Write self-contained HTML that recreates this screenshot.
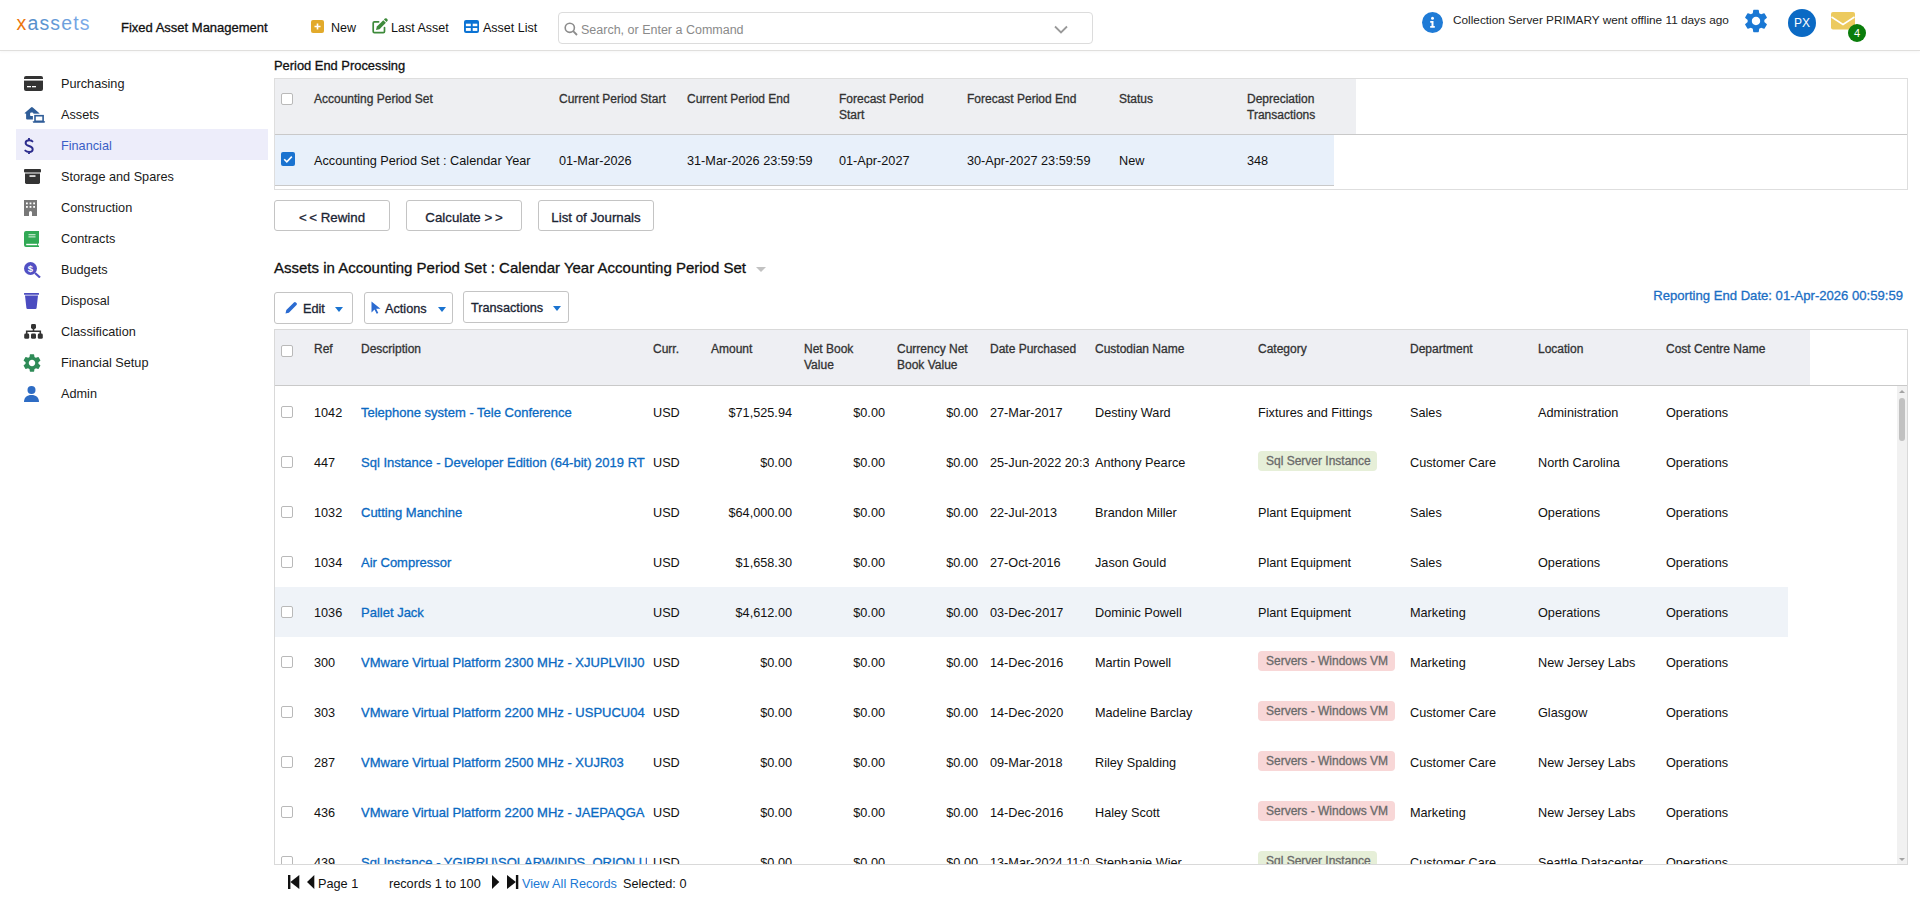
<!DOCTYPE html>
<html><head><meta charset="utf-8"><title>Fixed Asset Management</title>
<style>
*{box-sizing:border-box;margin:0;padding:0}
html,body{width:1920px;height:911px;overflow:hidden;background:#fff}
body{font-family:"Liberation Sans",sans-serif;font-size:12.7px;color:#111;position:relative}
.a{position:absolute;white-space:nowrap}
.sb{-webkit-text-stroke:0.3px currentColor}
.hdr{position:absolute;left:0;top:0;width:1920px;height:51px;border-bottom:1px solid #e0dfdd;box-shadow:0 1px 3px rgba(0,0,0,0.04);background:#fff}
.cb{position:absolute;width:12px;height:12px;border:1px solid #b9b9b9;border-radius:2px;background:#fff}
.btn{position:absolute;height:31px;border:1px solid #c4c4c4;border-radius:3px;background:#fff;color:#1b2433}
.lnk{color:#0a69c2;font-size:13px;-webkit-text-stroke:0.3px currentColor}
.badge{position:absolute;height:20px;border-radius:4px;color:#6a6a6a;padding:0 6.5px 0 8px;line-height:20px}
.bg{background:#e6efd8}.br{background:#f8d7d7}
.nav{position:absolute;left:61px;color:#1a1a1a}
</style></head><body>

<div class="hdr"></div>
<svg class="a" style="left:14px;top:8px" width="80" height="26" viewBox="0 0 80 26"><defs><linearGradient id="lg" x1="0" y1="0" x2="1" y2="0"><stop offset="0" stop-color="#4a87c2"/><stop offset="1" stop-color="#7eabea"/></linearGradient></defs><text x="2.5" y="22" font-family="Liberation Sans" font-size="19.5" textLength="73" lengthAdjust="spacing"><tspan fill="#ec740c">x</tspan><tspan fill="url(#lg)">assets</tspan></text></svg>
<div class="a sb" style="left:121px;top:20px;font-size:13px;line-height:16px;color:#111">Fixed Asset Management</div>
<div class="a" style="left:311px;top:20px;width:13px;height:13px;background:#e2aa2b;border-radius:2px"><svg width="13" height="13" viewBox="0 0 13 13" style="position:absolute;left:0;top:0"><path d="M6.5 3.5v6M3.5 6.5h6" stroke="#fff" stroke-width="1.6"/></svg></div>
<div class="a" style="left:331px;top:20px;font-size:12.5px;line-height:16px">New</div>
<svg class="a" style="left:368px;top:14px" width="24" height="24" viewBox="0 0 24 24"><path d="M10.6 7.8H6.4Q5.2 7.8 5.2 9V17.4Q5.2 18.6 6.4 18.6H15.3Q16.5 18.6 16.5 17.4V13.5" fill="none" stroke="#3d8a3a" stroke-width="1.7" stroke-linecap="round"/><path d="M8 16.1L8.9 12.6L15.3 6.2L17.9 8.8L11.5 15.2Z" fill="#3d8a3a"/><path d="M15.9 5.6L16.9 4.6Q17.8 3.7 18.7 4.6L19.4 5.3Q20.3 6.2 19.4 7.1L18.5 8.1Z" fill="#3d8a3a"/></svg>
<div class="a" style="left:391px;top:20px;font-size:12.5px;line-height:16px">Last Asset</div>
<div class="a" style="left:464px;top:20px;width:15px;height:13px;background:#0b73d4;border-radius:2px"><svg width="15" height="13" viewBox="0 0 15 13" style="position:absolute;left:0;top:0"><rect x="1.9" y="3.7" width="4.9" height="2.5" fill="#fff"/><rect x="8.7" y="3.7" width="4.6" height="2.5" fill="#fff"/><rect x="1.9" y="8" width="4.9" height="2.9" fill="#fff"/><rect x="8.7" y="8" width="4.6" height="2.9" fill="#fff"/></svg></div>
<div class="a" style="left:483px;top:20px;font-size:12.5px;line-height:16px">Asset List</div>
<div class="a" style="left:558px;top:12px;width:535px;height:32px;border:1px solid #dcdcdc;border-radius:4px;background:#fff"></div>
<div class="a" style="left:564px;top:22px;width:14px;height:14px"><svg width="14" height="14" viewBox="0 0 14 14"><circle cx="5.8" cy="5.8" r="4.6" fill="none" stroke="#8c8c8c" stroke-width="1.6"/><path d="M9.2 9.2l3.8 3.8" stroke="#8c8c8c" stroke-width="1.8"/></svg></div>
<div class="a" style="left:581px;top:22px;font-size:12.5px;line-height:16px;color:#8a8a8a">Search, or Enter a Command</div>
<div class="a" style="left:1054px;top:23px;width:14px;height:9px"><svg width="14" height="9" viewBox="0 0 14 9"><path d="M1 1.5l6 6 6-6" fill="none" stroke="#999" stroke-width="1.8"/></svg></div>
<div class="a" style="left:1422px;top:11.5px;width:21px;height:21px;border-radius:50%;background:#1f7bd6"><svg width="21" height="21" viewBox="0 0 21 21" style="position:absolute;left:0;top:0"><circle cx="10.5" cy="6.3" r="1.5" fill="#fff"/><path d="M8.2 9h3.3v5h1.3v1.8H8.2V14h1.3v-3.2H8.2z" fill="#fff"/></svg></div>
<div class="a" style="left:1453px;top:13px;font-size:11.8px;line-height:15px;color:#222">Collection Server PRIMARY went offline 11 days ago</div>
<div class="a" style="left:1742px;top:7px;width:28px;height:28px"><svg width="28" height="28" viewBox="0 0 24 24"><path fill="#1a78d4" d="M19.14 12.94c.04-.3.06-.61.06-.94 0-.32-.02-.64-.07-.94l2.03-1.58a.49.49 0 0 0 .12-.61l-1.92-3.32a.488.488 0 0 0-.59-.22l-2.39.96c-.5-.38-1.03-.7-1.62-.94l-.36-2.54a.484.484 0 0 0-.48-.41h-3.84c-.24 0-.43.17-.47.41l-.36 2.54c-.59.24-1.13.57-1.62.94l-2.39-.96c-.22-.08-.47 0-.59.22L2.74 8.87c-.12.21-.08.47.12.61l2.03 1.58c-.05.3-.09.63-.09.94s.02.64.07.94l-2.03 1.58a.49.49 0 0 0-.12.61l1.92 3.32c.12.22.37.29.59.22l2.39-.96c.5.38 1.03.7 1.62.94l.36 2.54c.05.24.24.41.48.41h3.84c.24 0 .44-.17.47-.41l.36-2.54c.59-.24 1.13-.56 1.62-.94l2.39.96c.22.08.47 0 .59-.22l1.92-3.32c.12-.22.07-.47-.12-.61l-2.01-1.58zM12 15.6c-1.98 0-3.6-1.62-3.6-3.6s1.62-3.6 3.6-3.6 3.6 1.62 3.6 3.6-1.62 3.6-3.6 3.6z"/></svg></div>
<div class="a" style="left:1788px;top:9px;width:28px;height:28px;border-radius:50%;background:#0b6ac4;color:#fff;font-size:12px;line-height:28px;text-align:center">PX</div>
<div class="a" style="left:1831px;top:12px;width:24px;height:18px"><svg width="24" height="18" viewBox="0 0 24 18"><rect x="0" y="0" width="24" height="17.5" rx="2" fill="#ecca5e"/><path d="M0.5 5l11.5 7.5L23.5 5" fill="none" stroke="#fff" stroke-width="1.5"/></svg></div>
<div class="a" style="left:1848px;top:23.5px;width:18px;height:18px;border-radius:50%;background:#0a7d0b;color:#fff;font-size:11px;line-height:18px;text-align:center">4</div>
<div class="a" style="left:16px;top:129px;width:252px;height:31px;background:#ededfa"></div>
<div class="a" style="left:61px;top:76px;font-size:12.7px;line-height:16px;color:#1a1a1a">Purchasing</div>
<div class="a" style="left:61px;top:107px;font-size:12.7px;line-height:16px;color:#1a1a1a">Assets</div>
<div class="a" style="left:61px;top:138px;font-size:12.7px;line-height:16px;color:#3a5ec6">Financial</div>
<div class="a" style="left:61px;top:169px;font-size:12.7px;line-height:16px;color:#1a1a1a">Storage and Spares</div>
<div class="a" style="left:61px;top:200px;font-size:12.7px;line-height:16px;color:#1a1a1a">Construction</div>
<div class="a" style="left:61px;top:231px;font-size:12.7px;line-height:16px;color:#1a1a1a">Contracts</div>
<div class="a" style="left:61px;top:262px;font-size:12.7px;line-height:16px;color:#1a1a1a">Budgets</div>
<div class="a" style="left:61px;top:293px;font-size:12.7px;line-height:16px;color:#1a1a1a">Disposal</div>
<div class="a" style="left:61px;top:324px;font-size:12.7px;line-height:16px;color:#1a1a1a">Classification</div>
<div class="a" style="left:61px;top:355px;font-size:12.7px;line-height:16px;color:#1a1a1a">Financial Setup</div>
<div class="a" style="left:61px;top:386px;font-size:12.7px;line-height:16px;color:#1a1a1a">Admin</div>
<div class="a" style="left:24px;top:76px"><svg width="19" height="15" viewBox="0 0 19 15"><rect x="0" y="0" width="19" height="15" rx="2" fill="#333"/><rect x="0" y="3" width="19" height="1.6" fill="#fff"/><rect x="3" y="10" width="4" height="1.3" fill="#fff"/><rect x="8" y="10" width="4" height="1.3" fill="#fff"/></svg></div>
<div class="a" style="left:24px;top:106px"><svg width="22" height="18" viewBox="0 0 22 18"><path d="M0.4 7.2L7 1.4Q7.9 0.6 8.8 1.4L15.4 7.2Q15.8 7.7 15.2 7.7H2.1V12.6Q2.1 13.6 3.1 13.6H8.9V7.7H2.1Z" fill="#2f5d98"/><rect x="6.1" y="6.4" width="3.3" height="3.7" rx="1.2" fill="#fff"/><rect x="9.4" y="7.9" width="12" height="8" fill="#fff"/><rect x="11" y="9.7" width="8.1" height="5.6" fill="none" stroke="#2f5d98" stroke-width="1.6"/><path d="M8.6 15.2H21.2L20.6 16.8H9.2Z" fill="#2f5d98"/></svg></div>
<div class="a" style="left:24px;top:138px"><svg width="10" height="16" viewBox="0 0 10 16"><path d="M8.4 3.4C7.6 2.6 6.6 2.2 5.2 2.2 3.1 2.2 1.6 3.3 1.6 5c0 1.8 1.5 2.4 3.5 3 2.1.6 3.6 1.3 3.6 3.2 0 1.8-1.6 2.8-3.6 2.8-1.5 0-2.9-.6-3.8-1.4M5 .6v1.6M5 14v1.4" fill="none" stroke="#2b2b8c" stroke-width="1.9" stroke-linecap="round"/></svg></div>
<div class="a" style="left:24px;top:169px"><svg width="17" height="15" viewBox="0 0 17 15"><rect x="0" y="0" width="17" height="3.6" rx="1" fill="#333"/><path d="M1 4.6h15v9a1.4 1.4 0 0 1-1.4 1.4H2.4A1.4 1.4 0 0 1 1 13.6z" fill="#333"/><rect x="5.5" y="6.3" width="6" height="1.5" fill="#fff"/></svg></div>
<div class="a" style="left:24px;top:200px"><svg width="13" height="16" viewBox="0 0 13 16"><path d="M0 0h13v16H8v-3.5a1.5 1.5 0 0 0-3 0V16H0z" fill="#787878"/><g fill="#fff"><rect x="2" y="2.5" width="1.8" height="1.8"/><rect x="5.6" y="2.5" width="1.8" height="1.8"/><rect x="9.2" y="2.5" width="1.8" height="1.8"/><rect x="2" y="6" width="1.8" height="1.8"/><rect x="5.6" y="6" width="1.8" height="1.8"/><rect x="9.2" y="6" width="1.8" height="1.8"/></g></svg></div>
<div class="a" style="left:24px;top:231px"><svg width="15" height="16" viewBox="0 0 15 16"><path d="M2 0h13v12.5h-1v2h1V16H2a2 2 0 0 1-2-2V2a2 2 0 0 1 2-2z" fill="#31a955"/><rect x="4.5" y="3" width="7" height="1.3" fill="#b8e4c4"/><rect x="4.5" y="5.2" width="7" height="1.3" fill="#b8e4c4"/><rect x="2.2" y="12.8" width="11" height="1.4" fill="#fff"/></svg></div>
<div class="a" style="left:24px;top:262px"><svg width="17" height="16" viewBox="0 0 17 16"><circle cx="6.5" cy="6.5" r="6.5" fill="#5250c3"/><path d="M11 11l5 4.5" stroke="#5250c3" stroke-width="2.2"/><text x="6.5" y="10" text-anchor="middle" font-family="Liberation Sans" font-weight="bold" font-size="9.5" fill="#fff">$</text></svg></div>
<div class="a" style="left:24px;top:293px"><svg width="15" height="16" viewBox="0 0 15 16"><rect x="0" y="0" width="15" height="1.8" rx="0.5" fill="#4b4cc0"/><path d="M1 2.6h13l-1.4 12.4a1.2 1.2 0 0 1-1.2 1H3.6a1.2 1.2 0 0 1-1.2-1z" fill="#4b4cc0"/></svg></div>
<div class="a" style="left:24px;top:324px"><svg width="19" height="15" viewBox="0 0 19 15"><rect x="7" y="0" width="5" height="5" rx="1.4" fill="#333"/><path d="M9.5 4v3.4M2.7 10V7.3h13.6V10" fill="none" stroke="#333" stroke-width="1.6"/><rect x="0.2" y="9.6" width="5" height="5.2" rx="1.4" fill="#333"/><rect x="7" y="9.6" width="5" height="5.2" rx="1.4" fill="#333"/><rect x="13.8" y="9.6" width="5" height="5.2" rx="1.4" fill="#333"/></svg></div>
<div class="a" style="left:23px;top:354px"><svg width="18" height="18" viewBox="2 2 20 20"><path fill="#2e8b57" d="M19.14 12.94c.04-.3.06-.61.06-.94 0-.32-.02-.64-.07-.94l2.03-1.58a.49.49 0 0 0 .12-.61l-1.92-3.32a.488.488 0 0 0-.59-.22l-2.39.96c-.5-.38-1.03-.7-1.62-.94l-.36-2.54a.484.484 0 0 0-.48-.41h-3.84c-.24 0-.43.17-.47.41l-.36 2.54c-.59.24-1.13.57-1.62.94l-2.39-.96c-.22-.08-.47 0-.59.22L2.74 8.87c-.12.21-.08.47.12.61l2.03 1.58c-.05.3-.09.63-.09.94s.02.64.07.94l-2.03 1.58a.49.49 0 0 0-.12.61l1.92 3.32c.12.22.37.29.59.22l2.39-.96c.5.38 1.03.7 1.62.94l.36 2.54c.05.24.24.41.48.41h3.84c.24 0 .44-.17.47-.41l.36-2.54c.59-.24 1.13-.56 1.62-.94l2.39.96c.22.08.47 0 .59-.22l1.92-3.32c.12-.22.07-.47-.12-.61l-2.01-1.58zM12 15.6c-1.98 0-3.6-1.62-3.6-3.6s1.62-3.6 3.6-3.6 3.6 1.62 3.6 3.6-1.62 3.6-3.6 3.6z"/></svg></div>
<div class="a" style="left:24px;top:386px"><svg width="15" height="16" viewBox="0 0 15 16"><circle cx="7.5" cy="4" r="4" fill="#2e6cc4"/><path d="M0 16c0-4.5 3-7 7.5-7s7.5 2.5 7.5 7z" fill="#2e6cc4"/></svg></div>
<div class="a sb" style="left:274px;top:58px;font-size:12.9px;line-height:16px;color:#111">Period End Processing</div>
<div class="a" style="left:274px;top:78px;width:1634px;height:112px;border:1px solid #dedede;background:#fff"></div>
<div class="a" style="left:275px;top:79px;width:1081px;height:55px;background:#eeeff2"></div>
<div class="a" style="left:275px;top:134px;width:1632px;height:1px;background:#c9c9c9"></div>
<div class="a" style="left:275px;top:135px;width:1059px;height:50px;background:#e8f0fa"></div>
<div class="a" style="left:275px;top:185px;width:1059px;height:1px;background:#c9c9c9"></div>
<div class="cb" style="left:281px;top:93px"></div>
<div class="a" style="left:281px;top:152px;width:14px;height:14px;background:#1a73d0;border-radius:2px"><svg width="14" height="14" viewBox="0 0 14 14" style="position:absolute;left:0;top:0"><path d="M3.2 7.2l2.6 2.6 5-5.2" fill="none" stroke="#fff" stroke-width="1.6"/></svg></div>
<div class="a sb" style="left:314px;top:91px;font-size:12px;line-height:16px;color:#333">Accounting Period Set</div>
<div class="a sb" style="left:559px;top:91px;font-size:12px;line-height:16px;color:#333">Current Period Start</div>
<div class="a sb" style="left:687px;top:91px;font-size:12px;line-height:16px;color:#333">Current Period End</div>
<div class="a sb" style="left:839px;top:91px;font-size:12px;line-height:16px;color:#333">Forecast Period<br>Start</div>
<div class="a sb" style="left:967px;top:91px;font-size:12px;line-height:16px;color:#333">Forecast Period End</div>
<div class="a sb" style="left:1119px;top:91px;font-size:12px;line-height:16px;color:#333">Status</div>
<div class="a sb" style="left:1247px;top:91px;font-size:12px;line-height:16px;color:#333">Depreciation<br>Transactions</div>
<div class="a" style="left:314px;top:153px;font-size:12.7px;line-height:16px">Accounting Period Set : Calendar Year</div>
<div class="a" style="left:559px;top:153px;font-size:12.7px;line-height:16px">01-Mar-2026</div>
<div class="a" style="left:687px;top:153px;font-size:12.7px;line-height:16px">31-Mar-2026 23:59:59</div>
<div class="a" style="left:839px;top:153px;font-size:12.7px;line-height:16px">01-Apr-2027</div>
<div class="a" style="left:967px;top:153px;font-size:12.7px;line-height:16px">30-Apr-2027 23:59:59</div>
<div class="a" style="left:1119px;top:153px;font-size:12.7px;line-height:16px">New</div>
<div class="a" style="left:1247px;top:153px;font-size:12.7px;line-height:16px">348</div>
<div class="btn sb" style="left:274px;top:200px;width:116px;text-align:center;line-height:33px;font-size:13.3px">&lt;&thinsp;&lt; Rewind</div>
<div class="btn sb" style="left:406px;top:200px;width:116px;text-align:center;line-height:33px;font-size:13.3px">Calculate &gt;&thinsp;&gt;</div>
<div class="btn sb" style="left:538px;top:200px;width:116px;text-align:center;line-height:33px;font-size:13.3px">List of Journals</div>
<div class="a sb" style="left:274px;top:259px;font-size:15px;line-height:18px;color:#111">Assets in Accounting Period Set : Calendar Year Accounting Period Set</div>
<div class="a" style="left:756px;top:267px;width:0;height:0;border-left:5.5px solid transparent;border-right:5.5px solid transparent;border-top:5.5px solid #c2c2c2"></div>
<div class="btn" style="left:274px;top:292px;width:79px;height:32px"><svg width="13" height="13" viewBox="0 0 13 13" style="position:absolute;left:10px;top:8px"><path d="M0.5 12.5L1.3 9.1L8.9 1.5Q9.9 0.5 10.9 1.5L11.5 2.1Q12.5 3.1 11.5 4.1L3.9 11.7Z" fill="#2b6bd1"/></svg><span class="a sb" style="left:28px;top:8px;line-height:16px">Edit</span><div style="position:absolute;width:0;height:0;border-left:4.5px solid transparent;border-right:4.5px solid transparent;border-top:5px solid #1a73d0;left:60px;top:14px"></div></div>
<div class="btn" style="left:364px;top:292px;width:89px;height:32px"><svg width="10" height="13" viewBox="0 0 10 13" style="position:absolute;left:6px;top:8px"><path d="M0.5 0.5v11l3-3 2.2 4.3 1.6-.8-2.1-4.2H9.5z" fill="#2b6bd1"/></svg><span class="a sb" style="left:20px;top:8px;line-height:16px">Actions</span><div style="position:absolute;width:0;height:0;border-left:4.5px solid transparent;border-right:4.5px solid transparent;border-top:5px solid #1a73d0;left:73px;top:14px"></div></div>
<div class="btn" style="left:463px;top:291px;width:106px;height:32px"><span class="a sb" style="left:7px;top:8px;line-height:16px">Transactions</span><div style="position:absolute;width:0;height:0;border-left:4.5px solid transparent;border-right:4.5px solid transparent;border-top:5px solid #1a73d0;left:89px;top:14px"></div></div>
<div class="a sb" style="right:17px;top:288px;font-size:13.1px;line-height:16px;color:#1a6ec4">Reporting End Date: 01-Apr-2026 00:59:59</div>
<div class="a" style="left:274px;top:329px;width:1634px;height:536px;border:1px solid #d9d9d9;background:#fff;overflow:hidden">
<div class="a" style="left:0;top:0;width:1535px;height:55px;background:#eeeff3"></div>
<div class="a" style="left:0;top:55px;width:1632px;height:1px;background:#c9c9c9"></div>
<div class="cb" style="left:6px;top:15px"></div>
<div class="a sb" style="left:39px;top:11px;font-size:12px;line-height:16px;color:#333">Ref</div>
<div class="a sb" style="left:86px;top:11px;font-size:12px;line-height:16px;color:#333">Description</div>
<div class="a sb" style="left:378px;top:11px;font-size:12px;line-height:16px;color:#333">Curr.</div>
<div class="a sb" style="left:436px;top:11px;font-size:12px;line-height:16px;color:#333">Amount</div>
<div class="a sb" style="left:529px;top:11px;font-size:12px;line-height:16px;color:#333">Net Book<br>Value</div>
<div class="a sb" style="left:622px;top:11px;font-size:12px;line-height:16px;color:#333">Currency Net<br>Book Value</div>
<div class="a sb" style="left:715px;top:11px;font-size:12px;line-height:16px;color:#333">Date Purchased</div>
<div class="a sb" style="left:820px;top:11px;font-size:12px;line-height:16px;color:#333">Custodian Name</div>
<div class="a sb" style="left:983px;top:11px;font-size:12px;line-height:16px;color:#333">Category</div>
<div class="a sb" style="left:1135px;top:11px;font-size:12px;line-height:16px;color:#333">Department</div>
<div class="a sb" style="left:1263px;top:11px;font-size:12px;line-height:16px;color:#333">Location</div>
<div class="a sb" style="left:1391px;top:11px;font-size:12px;line-height:16px;color:#333">Cost Centre Name</div>
<div class="a" style="left:1622px;top:56px;width:10px;height:479px;background:#f1f1f1"></div>
<div class="a" style="left:1624px;top:68px;width:6px;height:43px;border-radius:3px;background:#c1c1c1"></div>
<div class="a" style="left:1624px;top:60px;width:0;height:0;border-left:3px solid transparent;border-right:3px solid transparent;border-bottom:3px solid #a3a3a3"></div>
<div class="a" style="left:1624px;top:528px;width:0;height:0;border-left:3px solid transparent;border-right:3px solid transparent;border-top:3px solid #a3a3a3"></div>
<div class="cb" style="left:6px;top:76px"></div>
<div class="a " style="left:39px;top:75px;line-height:16px;">1042</div>
<div class="a lnk" style="left:86px;top:75px;line-height:16px;width:286px;overflow:hidden;">Telephone system - Tele Conference</div>
<div class="a " style="left:378px;top:75px;line-height:16px;">USD</div>
<div class="a" style="left:427px;top:75px;width:90px;text-align:right;line-height:16px">$71,525.94</div>
<div class="a" style="left:520px;top:75px;width:90px;text-align:right;line-height:16px">$0.00</div>
<div class="a" style="left:613px;top:75px;width:90px;text-align:right;line-height:16px">$0.00</div>
<div class="a " style="left:715px;top:75px;line-height:16px;width:99px;overflow:hidden;">27-Mar-2017</div>
<div class="a " style="left:820px;top:75px;line-height:16px;width:157px;overflow:hidden;">Destiny Ward</div>
<div class="a " style="left:983px;top:75px;line-height:16px;">Fixtures and Fittings</div>
<div class="a " style="left:1135px;top:75px;line-height:16px;">Sales</div>
<div class="a " style="left:1263px;top:75px;line-height:16px;">Administration</div>
<div class="a " style="left:1391px;top:75px;line-height:16px;">Operations</div>
<div class="cb" style="left:6px;top:126px"></div>
<div class="a " style="left:39px;top:125px;line-height:16px;">447</div>
<div class="a lnk" style="left:86px;top:125px;line-height:16px;width:286px;overflow:hidden;">Sql Instance - Developer Edition (64-bit) 2019 RT</div>
<div class="a " style="left:378px;top:125px;line-height:16px;">USD</div>
<div class="a" style="left:427px;top:125px;width:90px;text-align:right;line-height:16px">$0.00</div>
<div class="a" style="left:520px;top:125px;width:90px;text-align:right;line-height:16px">$0.00</div>
<div class="a" style="left:613px;top:125px;width:90px;text-align:right;line-height:16px">$0.00</div>
<div class="a " style="left:715px;top:125px;line-height:16px;width:99px;overflow:hidden;">25-Jun-2022 20:3</div>
<div class="a " style="left:820px;top:125px;line-height:16px;width:157px;overflow:hidden;">Anthony Pearce</div>
<div class="badge sb bg" style="left:983px;top:121px;font-size:12px">Sql Server Instance</div>
<div class="a " style="left:1135px;top:125px;line-height:16px;">Customer Care</div>
<div class="a " style="left:1263px;top:125px;line-height:16px;">North Carolina</div>
<div class="a " style="left:1391px;top:125px;line-height:16px;">Operations</div>
<div class="cb" style="left:6px;top:176px"></div>
<div class="a " style="left:39px;top:175px;line-height:16px;">1032</div>
<div class="a lnk" style="left:86px;top:175px;line-height:16px;width:286px;overflow:hidden;">Cutting Manchine</div>
<div class="a " style="left:378px;top:175px;line-height:16px;">USD</div>
<div class="a" style="left:427px;top:175px;width:90px;text-align:right;line-height:16px">$64,000.00</div>
<div class="a" style="left:520px;top:175px;width:90px;text-align:right;line-height:16px">$0.00</div>
<div class="a" style="left:613px;top:175px;width:90px;text-align:right;line-height:16px">$0.00</div>
<div class="a " style="left:715px;top:175px;line-height:16px;width:99px;overflow:hidden;">22-Jul-2013</div>
<div class="a " style="left:820px;top:175px;line-height:16px;width:157px;overflow:hidden;">Brandon Miller</div>
<div class="a " style="left:983px;top:175px;line-height:16px;">Plant Equipment</div>
<div class="a " style="left:1135px;top:175px;line-height:16px;">Sales</div>
<div class="a " style="left:1263px;top:175px;line-height:16px;">Operations</div>
<div class="a " style="left:1391px;top:175px;line-height:16px;">Operations</div>
<div class="cb" style="left:6px;top:226px"></div>
<div class="a " style="left:39px;top:225px;line-height:16px;">1034</div>
<div class="a lnk" style="left:86px;top:225px;line-height:16px;width:286px;overflow:hidden;">Air Compressor</div>
<div class="a " style="left:378px;top:225px;line-height:16px;">USD</div>
<div class="a" style="left:427px;top:225px;width:90px;text-align:right;line-height:16px">$1,658.30</div>
<div class="a" style="left:520px;top:225px;width:90px;text-align:right;line-height:16px">$0.00</div>
<div class="a" style="left:613px;top:225px;width:90px;text-align:right;line-height:16px">$0.00</div>
<div class="a " style="left:715px;top:225px;line-height:16px;width:99px;overflow:hidden;">27-Oct-2016</div>
<div class="a " style="left:820px;top:225px;line-height:16px;width:157px;overflow:hidden;">Jason Gould</div>
<div class="a " style="left:983px;top:225px;line-height:16px;">Plant Equipment</div>
<div class="a " style="left:1135px;top:225px;line-height:16px;">Sales</div>
<div class="a " style="left:1263px;top:225px;line-height:16px;">Operations</div>
<div class="a " style="left:1391px;top:225px;line-height:16px;">Operations</div>
<div class="a" style="left:0;top:257px;width:1513px;height:50px;background:#eff3f8"></div>
<div class="cb" style="left:6px;top:276px"></div>
<div class="a " style="left:39px;top:275px;line-height:16px;">1036</div>
<div class="a lnk" style="left:86px;top:275px;line-height:16px;width:286px;overflow:hidden;">Pallet Jack</div>
<div class="a " style="left:378px;top:275px;line-height:16px;">USD</div>
<div class="a" style="left:427px;top:275px;width:90px;text-align:right;line-height:16px">$4,612.00</div>
<div class="a" style="left:520px;top:275px;width:90px;text-align:right;line-height:16px">$0.00</div>
<div class="a" style="left:613px;top:275px;width:90px;text-align:right;line-height:16px">$0.00</div>
<div class="a " style="left:715px;top:275px;line-height:16px;width:99px;overflow:hidden;">03-Dec-2017</div>
<div class="a " style="left:820px;top:275px;line-height:16px;width:157px;overflow:hidden;">Dominic Powell</div>
<div class="a " style="left:983px;top:275px;line-height:16px;">Plant Equipment</div>
<div class="a " style="left:1135px;top:275px;line-height:16px;">Marketing</div>
<div class="a " style="left:1263px;top:275px;line-height:16px;">Operations</div>
<div class="a " style="left:1391px;top:275px;line-height:16px;">Operations</div>
<div class="cb" style="left:6px;top:326px"></div>
<div class="a " style="left:39px;top:325px;line-height:16px;">300</div>
<div class="a lnk" style="left:86px;top:325px;line-height:16px;width:286px;overflow:hidden;">VMware Virtual Platform 2300 MHz - XJUPLVIIJ0</div>
<div class="a " style="left:378px;top:325px;line-height:16px;">USD</div>
<div class="a" style="left:427px;top:325px;width:90px;text-align:right;line-height:16px">$0.00</div>
<div class="a" style="left:520px;top:325px;width:90px;text-align:right;line-height:16px">$0.00</div>
<div class="a" style="left:613px;top:325px;width:90px;text-align:right;line-height:16px">$0.00</div>
<div class="a " style="left:715px;top:325px;line-height:16px;width:99px;overflow:hidden;">14-Dec-2016</div>
<div class="a " style="left:820px;top:325px;line-height:16px;width:157px;overflow:hidden;">Martin Powell</div>
<div class="badge sb br" style="left:983px;top:321px;font-size:12px">Servers - Windows VM</div>
<div class="a " style="left:1135px;top:325px;line-height:16px;">Marketing</div>
<div class="a " style="left:1263px;top:325px;line-height:16px;">New Jersey Labs</div>
<div class="a " style="left:1391px;top:325px;line-height:16px;">Operations</div>
<div class="cb" style="left:6px;top:376px"></div>
<div class="a " style="left:39px;top:375px;line-height:16px;">303</div>
<div class="a lnk" style="left:86px;top:375px;line-height:16px;width:286px;overflow:hidden;">VMware Virtual Platform 2200 MHz - USPUCU04</div>
<div class="a " style="left:378px;top:375px;line-height:16px;">USD</div>
<div class="a" style="left:427px;top:375px;width:90px;text-align:right;line-height:16px">$0.00</div>
<div class="a" style="left:520px;top:375px;width:90px;text-align:right;line-height:16px">$0.00</div>
<div class="a" style="left:613px;top:375px;width:90px;text-align:right;line-height:16px">$0.00</div>
<div class="a " style="left:715px;top:375px;line-height:16px;width:99px;overflow:hidden;">14-Dec-2020</div>
<div class="a " style="left:820px;top:375px;line-height:16px;width:157px;overflow:hidden;">Madeline Barclay</div>
<div class="badge sb br" style="left:983px;top:371px;font-size:12px">Servers - Windows VM</div>
<div class="a " style="left:1135px;top:375px;line-height:16px;">Customer Care</div>
<div class="a " style="left:1263px;top:375px;line-height:16px;">Glasgow</div>
<div class="a " style="left:1391px;top:375px;line-height:16px;">Operations</div>
<div class="cb" style="left:6px;top:426px"></div>
<div class="a " style="left:39px;top:425px;line-height:16px;">287</div>
<div class="a lnk" style="left:86px;top:425px;line-height:16px;width:286px;overflow:hidden;">VMware Virtual Platform 2500 MHz - XUJR03</div>
<div class="a " style="left:378px;top:425px;line-height:16px;">USD</div>
<div class="a" style="left:427px;top:425px;width:90px;text-align:right;line-height:16px">$0.00</div>
<div class="a" style="left:520px;top:425px;width:90px;text-align:right;line-height:16px">$0.00</div>
<div class="a" style="left:613px;top:425px;width:90px;text-align:right;line-height:16px">$0.00</div>
<div class="a " style="left:715px;top:425px;line-height:16px;width:99px;overflow:hidden;">09-Mar-2018</div>
<div class="a " style="left:820px;top:425px;line-height:16px;width:157px;overflow:hidden;">Riley Spalding</div>
<div class="badge sb br" style="left:983px;top:421px;font-size:12px">Servers - Windows VM</div>
<div class="a " style="left:1135px;top:425px;line-height:16px;">Customer Care</div>
<div class="a " style="left:1263px;top:425px;line-height:16px;">New Jersey Labs</div>
<div class="a " style="left:1391px;top:425px;line-height:16px;">Operations</div>
<div class="cb" style="left:6px;top:476px"></div>
<div class="a " style="left:39px;top:475px;line-height:16px;">436</div>
<div class="a lnk" style="left:86px;top:475px;line-height:16px;width:286px;overflow:hidden;">VMware Virtual Platform 2200 MHz - JAEPAQGA</div>
<div class="a " style="left:378px;top:475px;line-height:16px;">USD</div>
<div class="a" style="left:427px;top:475px;width:90px;text-align:right;line-height:16px">$0.00</div>
<div class="a" style="left:520px;top:475px;width:90px;text-align:right;line-height:16px">$0.00</div>
<div class="a" style="left:613px;top:475px;width:90px;text-align:right;line-height:16px">$0.00</div>
<div class="a " style="left:715px;top:475px;line-height:16px;width:99px;overflow:hidden;">14-Dec-2016</div>
<div class="a " style="left:820px;top:475px;line-height:16px;width:157px;overflow:hidden;">Haley Scott</div>
<div class="badge sb br" style="left:983px;top:471px;font-size:12px">Servers - Windows VM</div>
<div class="a " style="left:1135px;top:475px;line-height:16px;">Marketing</div>
<div class="a " style="left:1263px;top:475px;line-height:16px;">New Jersey Labs</div>
<div class="a " style="left:1391px;top:475px;line-height:16px;">Operations</div>
<div class="cb" style="left:6px;top:526px"></div>
<div class="a " style="left:39px;top:525px;line-height:16px;">439</div>
<div class="a lnk" style="left:86px;top:525px;line-height:16px;width:286px;overflow:hidden;">Sql Instance - YGIRRU\SOLARWINDS_ORION Undefined</div>
<div class="a " style="left:378px;top:525px;line-height:16px;">USD</div>
<div class="a" style="left:427px;top:525px;width:90px;text-align:right;line-height:16px">$0.00</div>
<div class="a" style="left:520px;top:525px;width:90px;text-align:right;line-height:16px">$0.00</div>
<div class="a" style="left:613px;top:525px;width:90px;text-align:right;line-height:16px">$0.00</div>
<div class="a " style="left:715px;top:525px;line-height:16px;width:99px;overflow:hidden;">13-Mar-2024 11:0</div>
<div class="a " style="left:820px;top:525px;line-height:16px;width:157px;overflow:hidden;">Stephanie Wier</div>
<div class="badge sb bg" style="left:983px;top:521px;font-size:12px">Sql Server Instance</div>
<div class="a " style="left:1135px;top:525px;line-height:16px;">Customer Care</div>
<div class="a " style="left:1263px;top:525px;line-height:16px;">Seattle Datacenter</div>
<div class="a " style="left:1391px;top:525px;line-height:16px;">Operations</div>
</div>
<svg class="a" style="left:288px;top:875px" width="12" height="14" viewBox="0 0 12 14"><rect x="0" y="0" width="2.4" height="14" fill="#111"/><path d="M11.3 0v14L2.4 7z" fill="#111"/></svg>
<svg class="a" style="left:307px;top:875px" width="8" height="14" viewBox="0 0 8 14"><path d="M7.3 0v14L0 7z" fill="#111"/></svg>
<div class="a" style="left:318px;top:876px;line-height:16px">Page 1</div>
<div class="a" style="left:389px;top:876px;line-height:16px">records 1 to 100</div>
<svg class="a" style="left:492px;top:875px" width="8" height="14" viewBox="0 0 8 14"><path d="M0 0v14L7.3 7z" fill="#111"/></svg>
<svg class="a" style="left:507px;top:875px" width="12" height="14" viewBox="0 0 12 14"><path d="M0 0v14L8.9 7z" fill="#111"/><rect x="8.9" y="0" width="2.4" height="14" fill="#111"/></svg>
<div class="a" style="left:522px;top:876px;line-height:16px;color:#1a78d4">View All Records</div>
<div class="a" style="left:623px;top:876px;line-height:16px">Selected: 0</div>
</body></html>
